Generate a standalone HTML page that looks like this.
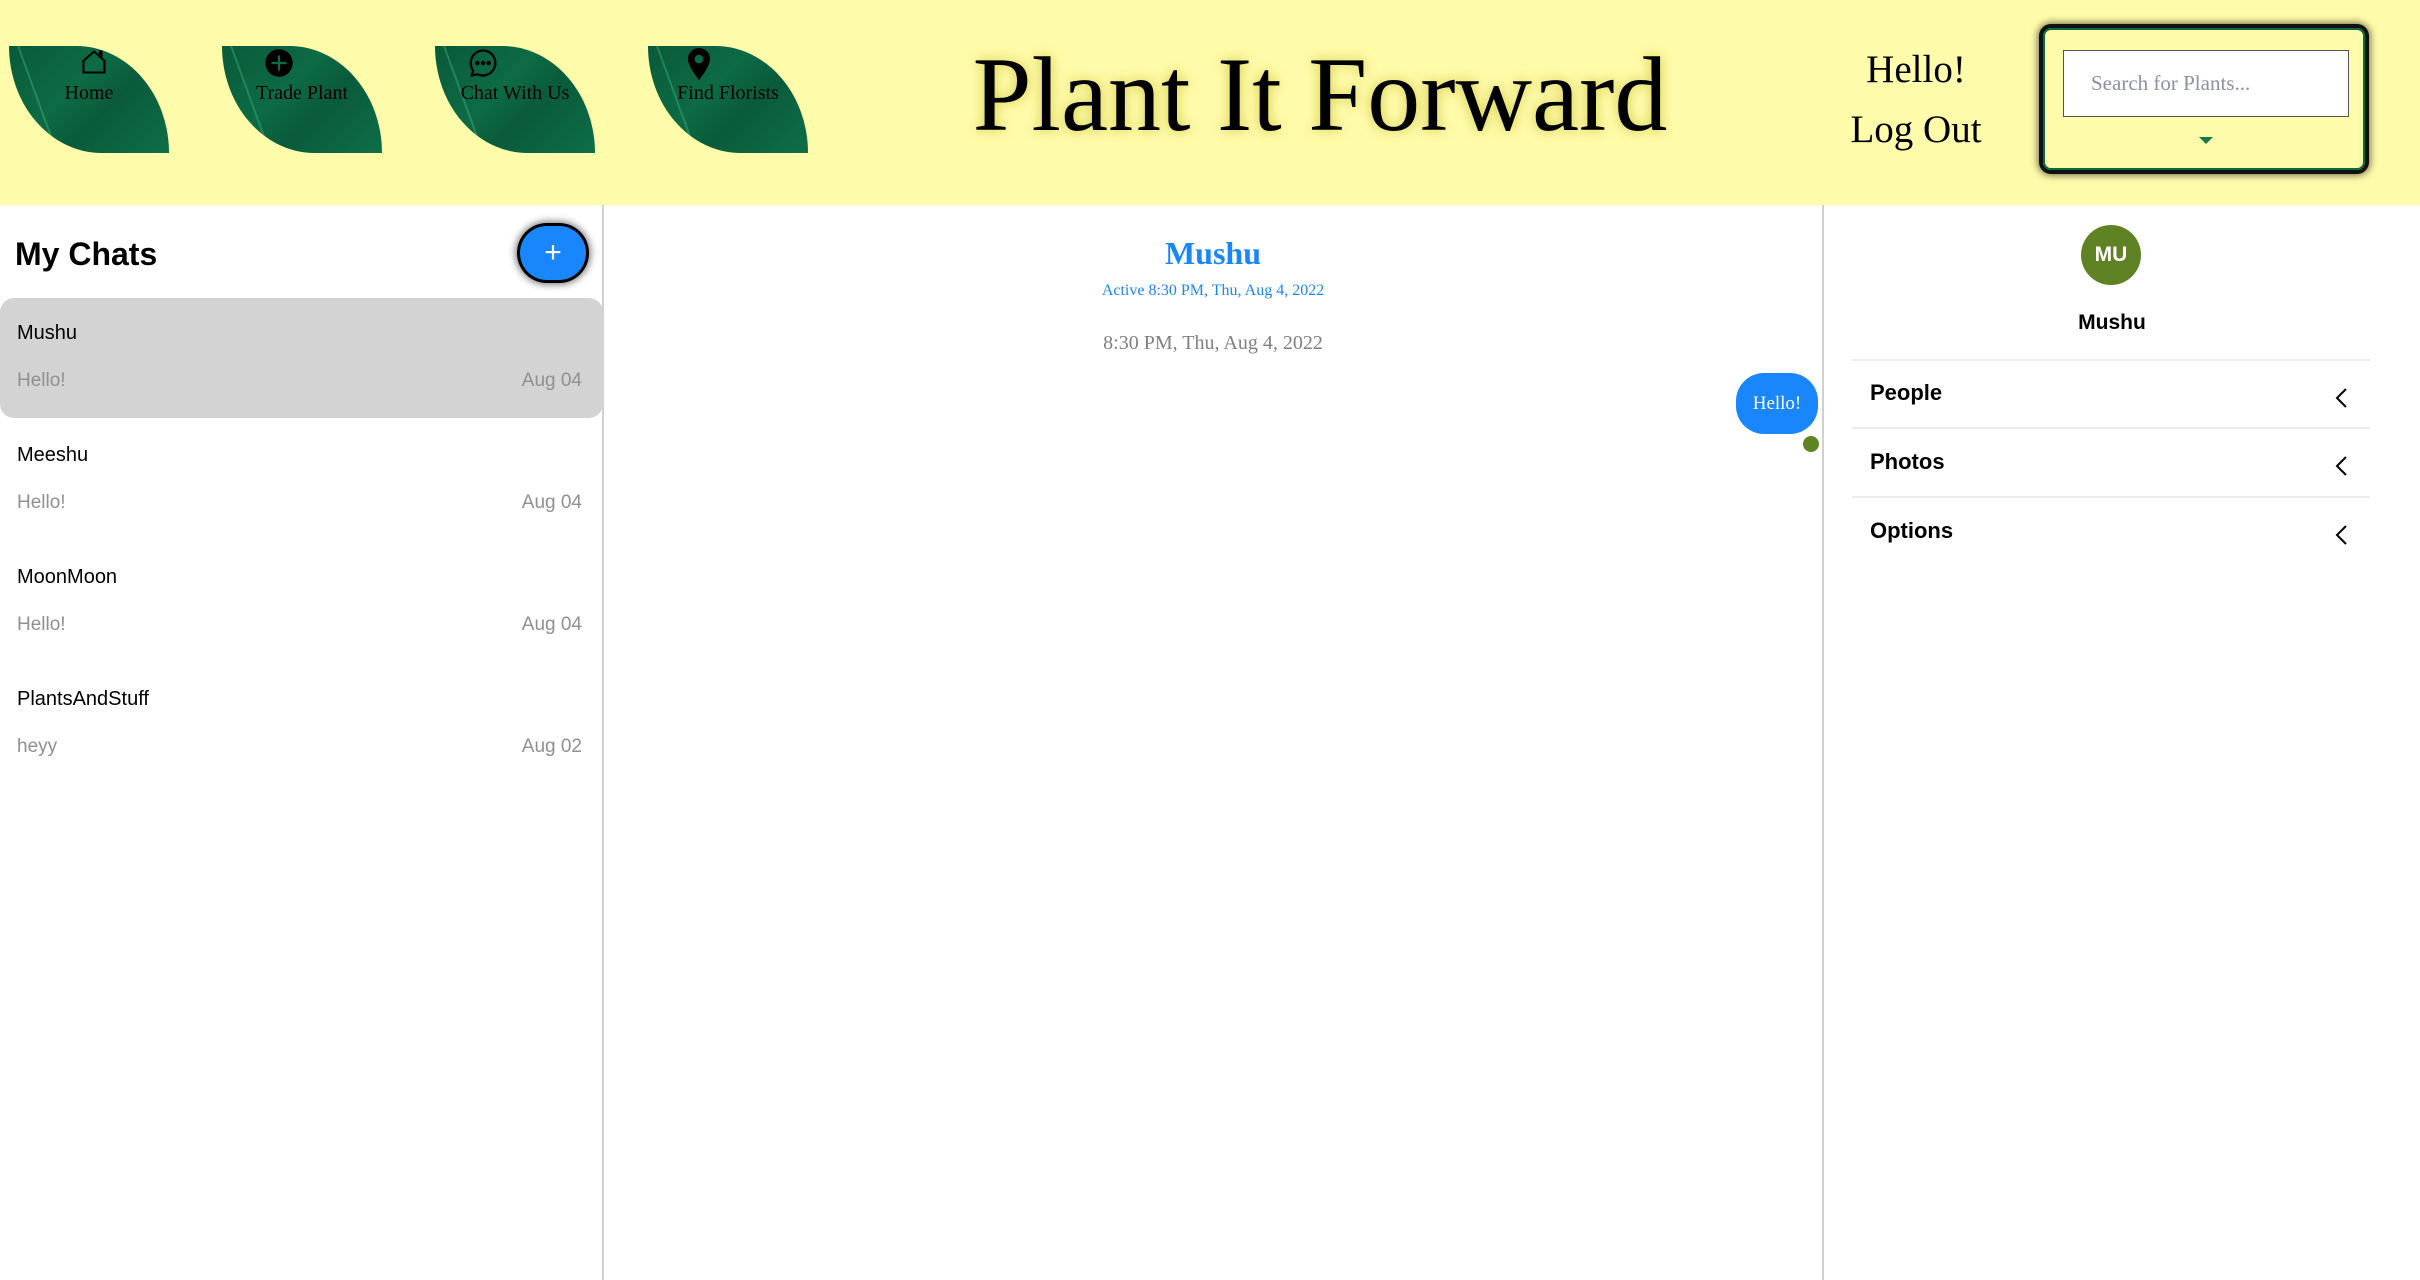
<!DOCTYPE html>
<html><head><meta charset="utf-8"><style>
*{margin:0;padding:0;box-sizing:border-box}
body{width:2420px;height:1280px;overflow:hidden;background:#fff;font-family:"Liberation Sans",sans-serif;position:relative}
.hdr{position:absolute;left:0;top:0;width:2420px;height:205px;background:#fefbaa}
.leaf{position:absolute;top:46px;width:160px;height:107px}
.leaf .bg{position:absolute;inset:0;border-radius:0 58% 0 58%/0 100% 0 100%;background:linear-gradient(135deg,#0a5a3a 0%,#0d6b45 40%,#0a5b3b 60%,#0e6e48 100%);overflow:hidden}
.leaf .bg:after{content:"";position:absolute;left:8px;top:0;width:2px;height:150px;background:rgba(80,200,140,.35);transform:rotate(-20deg);transform-origin:top left}
.leaf .lbl{position:absolute;left:0;right:0;top:36px;text-align:center;font-family:"Liberation Serif",serif;font-size:20px;color:#000;white-space:nowrap;z-index:2}
.leaf svg{position:absolute;top:2px;z-index:2}
.title{position:absolute;left:940px;width:760px;top:30px;text-align:center;font-family:"Liberation Serif",serif;font-size:106px;line-height:130px;color:#000;text-shadow:0 0 12px rgba(200,190,40,.8)}
.hl{position:absolute;width:200px;left:1816px;text-align:center;font-family:"Liberation Serif",serif;font-size:39px;color:#000}
.sbox{position:absolute;left:2043px;top:28px;width:322px;height:142px;border:2px solid #0c6b3e;border-radius:8px;box-shadow:0 0 0 4px #111,0 0 8px 5px rgba(0,0,0,.6)}
.inp{position:absolute;left:18px;top:20px;width:286px;height:67px;background:#fff;border:1px solid #555;font-family:"Liberation Serif",serif;font-size:21px;color:#8a92a0;padding:20px 0 0 27px}
.tri{position:absolute;left:154px;top:107px;width:0;height:0;border-left:7px solid transparent;border-right:7px solid transparent;border-top:7px solid #15784a}
.lp{position:absolute;left:0;top:205px;width:604px;height:1075px;border-right:2px solid #d0d0d0}
.rp{position:absolute;left:1822px;top:205px;width:2px;height:1075px;background:#d0d0d0}
.mc{position:absolute;left:15px;top:236px;font-size:32px;font-weight:bold;color:#000}
.plus{position:absolute;left:520px;top:226px;width:66px;height:54px;border-radius:27px;background:#1a86fc;box-shadow:0 0 0 3px #000,0 0 8px 4px rgba(0,0,0,.6);color:#fff;font-size:30px;text-align:center;line-height:54px}
.row{position:absolute;left:0;width:603px;height:120px}
.row.sel{background:#d3d3d3;border-radius:14px}
.row .n{position:absolute;left:17px;top:24px;font-size:20px;color:#000}
.row .p{position:absolute;left:17px;top:72px;font-size:19px;color:#909090}
.row .d{position:absolute;right:21px;top:72px;font-size:19px;color:#909090}
.cn{position:absolute;left:1013px;width:400px;text-align:center;font-family:"Liberation Serif",serif}
.bub{position:absolute;left:1736px;top:373px;width:82px;height:61px;border-radius:28px;background:#1a86fc;color:#fff;font-family:"Liberation Serif",serif;font-size:19px;text-align:center;line-height:61px}
.dot{position:absolute;left:1803px;top:436px;width:16px;height:16px;border-radius:50%;background:#5e8224}
.av{position:absolute;left:2081px;top:225px;width:60px;height:60px;border-radius:50%;background:#5e8224;color:#fff;font-weight:bold;font-size:21px;text-align:center;line-height:60px}
.rn{position:absolute;left:1952px;width:320px;top:311px;text-align:center;font-weight:bold;font-size:21px}
.sep{position:absolute;left:1852px;width:518px;height:2px;background:#ececec}
.it{position:absolute;left:1870px;font-weight:bold;font-size:22px;color:#000}
.chev{position:absolute;left:2334px}
</style></head><body>
<div class="hdr">
 <div class="leaf" style="left:9px"><div class="bg"></div><svg style="left:71px" width="28" height="28" viewBox="0 0 24 24" fill="none" stroke="#000" stroke-width="1.8"><path d="M3 11L12 3l9 8v10H3z M17 6V3h1.5v4.5"/></svg><div class="lbl">Home</div></div>
 <div class="leaf" style="left:222px"><div class="bg"></div><svg style="left:42px" width="30" height="30" viewBox="0 0 24 24"><circle cx="12" cy="12" r="11" fill="#000"/><path d="M12 6v12M6 12h12" stroke="#0c6b45" stroke-width="1.8"/></svg><div class="lbl">Trade Plant</div></div>
 <div class="leaf" style="left:435px"><div class="bg"></div><svg style="left:33px" width="30" height="30" viewBox="0 0 24 24" fill="none" stroke="#000" stroke-width="1.8"><path d="M12 2a10 10 0 1 1-4.5 19L3 22l1.2-4A10 10 0 0 1 12 2z"/><circle cx="7.5" cy="12" r=".9" fill="#000"/><circle cx="12" cy="12" r=".9" fill="#000"/><circle cx="16.5" cy="12" r=".9" fill="#000"/></svg><div class="lbl">Chat With Us</div></div>
 <div class="leaf" style="left:648px"><div class="bg"></div><svg style="left:38px" width="26" height="32" viewBox="0 0 20 26"><path d="M10 0a9 9 0 0 1 9 9c0 6-9 17-9 17S1 15 1 9a9 9 0 0 1 9-9z" fill="#000"/><circle cx="10" cy="9" r="3.5" fill="#0c6b45"/></svg><div class="lbl">Find Florists</div></div>
 <div class="title">Plant It Forward</div>
 <div class="hl" style="top:47px">Hello!</div>
 <div class="hl" style="top:107px">Log Out</div>
 <div class="sbox"><div class="inp">Search for Plants...</div><div class="tri"></div></div>
</div>
<div class="lp"></div>
<div class="rp"></div>
<div class="mc">My Chats</div>
<div class="plus">+</div>
<div class="row sel" style="top:298px"><div class="n">Mushu</div><div class="p">Hello!</div><div class="d">Aug 04</div></div>
<div class="row" style="top:420px"><div class="n">Meeshu</div><div class="p">Hello!</div><div class="d">Aug 04</div></div>
<div class="row" style="top:542px"><div class="n">MoonMoon</div><div class="p">Hello!</div><div class="d">Aug 04</div></div>
<div class="row" style="top:664px"><div class="n">PlantsAndStuff</div><div class="p">heyy</div><div class="d">Aug 02</div></div>
<div class="cn" style="top:235px;font-size:32px;font-weight:bold;color:#1a86fc">Mushu</div>
<div class="cn" style="top:282px;font-size:16px;color:#1a86fc">Active 8:30 PM, Thu, Aug 4, 2022</div>
<div class="cn" style="top:332px;font-size:20px;color:#808080">8:30 PM, Thu, Aug 4, 2022</div>
<div class="bub">Hello!</div>
<div class="dot"></div>
<div class="av">MU</div>
<div class="rn">Mushu</div>
<div class="sep" style="top:359px"></div>
<div class="sep" style="top:427px"></div>
<div class="sep" style="top:496px"></div>
<div class="it" style="top:380px">People</div>
<div class="it" style="top:449px">Photos</div>
<div class="it" style="top:518px">Options</div>
<svg class="chev" style="top:387px" width="16" height="22" viewBox="0 0 16 22"><path d="M12 2L3 11l9 9" fill="none" stroke="#000" stroke-width="2"/></svg>
<svg class="chev" style="top:455px" width="16" height="22" viewBox="0 0 16 22"><path d="M12 2L3 11l9 9" fill="none" stroke="#000" stroke-width="2"/></svg>
<svg class="chev" style="top:524px" width="16" height="22" viewBox="0 0 16 22"><path d="M12 2L3 11l9 9" fill="none" stroke="#000" stroke-width="2"/></svg>
</body></html>
